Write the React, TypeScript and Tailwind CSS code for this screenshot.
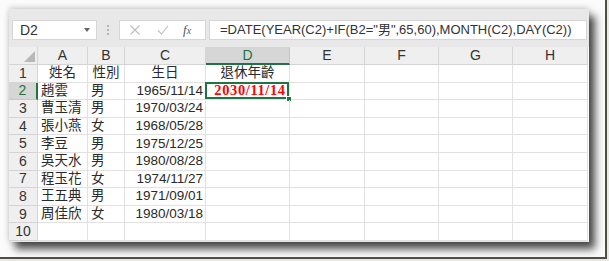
const cols = ['A', 'B', 'C', 'D', 'E', 'F', 'G', 'H'];

type Row = { a: string; b: string; c: string; d?: string };

const rows: Row[] = [
  { a: '趙雲', b: '男', c: '1965/11/14', d: '2030/11/14' },
  { a: '曹玉清', b: '男', c: '1970/03/24' },
  { a: '張小燕', b: '女', c: '1968/05/28' },
  { a: '李豆', b: '男', c: '1975/12/25' },
  { a: '吳天水', b: '男', c: '1980/08/28' },
  { a: '程玉花', b: '女', c: '1974/11/27' },
  { a: '王五典', b: '男', c: '1971/09/01' },
  { a: '周佳欣', b: '女', c: '1980/03/18' },
];

const font = { fontFamily: '"Liberation Sans", "Noto Sans CJK TC", sans-serif' };

function FormulaBar() {
  return (
    <div className="flex items-start h-[38px] pt-[11px] pl-[3px]">
      {/* Name box */}
      <div className="w-[85px] h-[20px] bg-white border border-[#d6d6d6] flex items-center justify-between pl-[7px] pr-[6px] text-[14px] text-[#333]">
        <span>D2</span>
        <span className="w-0 h-0 border-l-[3.5px] border-r-[3.5px] border-t-[4px] border-l-transparent border-r-transparent border-t-[#666]" />
      </div>
      <div className="w-[22px] h-[20px] flex flex-col items-center justify-center gap-[2px]">
        <span className="w-[2px] h-[2px] bg-[#b5b5b5]" />
        <span className="w-[2px] h-[2px] bg-[#b5b5b5]" />
        <span className="w-[2px] h-[2px] bg-[#b5b5b5]" />
      </div>
      {/* Cancel / enter / fx */}
      <div className="w-[87px] h-[20px] bg-white border border-[#d6d6d6] flex items-center">
        <svg width="12" height="12" viewBox="0 0 12 12" className="ml-[9px]">
          <path d="M1.5 1.5 L10.5 10.5 M10.5 1.5 L1.5 10.5" stroke="#bdbdbd" strokeWidth="1.1" fill="none" />
        </svg>
        <svg width="12" height="12" viewBox="0 0 12 12" className="ml-[16px]">
          <path d="M1 6.5 L4.5 10 L11 2" stroke="#bdbdbd" strokeWidth="1.1" fill="none" />
        </svg>
        <span
          className="ml-[14px] text-[13px] italic text-[#555]"
          style={{ fontFamily: '"Liberation Serif", serif' }}
        >
          f<span className="text-[10px]">x</span>
        </span>
      </div>
      {/* Formula input */}
      <div className="ml-[3px] w-[378px] h-[20px] bg-white border border-[#d6d6d6] flex items-center pl-[10px] text-[13px] text-[#333] whitespace-nowrap">
        =DATE(YEAR(C2)+IF(B2="男",65,60),MONTH(C2),DAY(C2))
      </div>
    </div>
  );
}

function Sheet() {
  return (
    <div
      className="grid grid-cols-[29px_50px_37px_81px_84px_75px_74px_74px_75px] grid-rows-[18px_repeat(10,17.6px)] text-[13.5px] text-[#2a2a2a] bg-white"
      style={font}
    >
      {/* corner */}
      <div className="bg-[#efefef] border-r border-b border-[#d4d4d4] flex items-end justify-end pr-[2px] pb-[2px]">
        <svg width="11" height="11" viewBox="0 0 11 11">
          <path d="M11 0 L11 11 L0 11 Z" fill="#b8b8b8" />
        </svg>
      </div>
      {cols.map((c) =>
        c === 'D' ? (
          <div
            key={c}
            className="bg-[#d6d6d6] border-r border-[#c6c6c6] border-b-2 border-b-[#217346] flex items-center justify-center text-[#217346] text-[14px]"
          >
            {c}
          </div>
        ) : (
          <div
            key={c}
            className="bg-[#efefef] border-r border-b border-[#d4d4d4] flex items-center justify-center text-[#333] text-[14px]"
          >
            {c}
          </div>
        )
      )}

      {/* row 1 */}
      <div className="bg-[#efefef] border-r border-b border-[#d4d4d4] flex items-center justify-center text-[#333] text-[14px]">1</div>
      <div className="border-r border-b border-[#e1e1e1] flex items-center justify-center">姓名</div>
      <div className="border-r border-b border-[#e1e1e1] flex items-center justify-center">性別</div>
      <div className="border-r border-b border-[#e1e1e1] flex items-center justify-center">生日</div>
      <div className="border-r border-b border-[#e1e1e1] flex items-center justify-center">退休年齡</div>
      <div className="border-r border-b border-[#e1e1e1]" />
      <div className="border-r border-b border-[#e1e1e1]" />
      <div className="border-r border-b border-[#e1e1e1]" />
      <div className="border-r border-b border-[#e1e1e1]" />

      {rows.map((r, i) => {
        const n = i + 2;
        const sel = n === 2;
        return [
          <div
            key={`h${n}`}
            className={
              sel
                ? 'bg-[#d6d6d6] border-r-2 border-r-[#217346] border-b border-b-[#c6c6c6] flex items-center justify-center text-[#217346] text-[14px]'
                : 'bg-[#efefef] border-r border-b border-[#d4d4d4] flex items-center justify-center text-[#333] text-[14px]'
            }
          >
            {n}
          </div>,
          <div key={`a${n}`} className="border-r border-b border-[#e1e1e1] flex items-center pl-[3px]">{r.a}</div>,
          <div key={`b${n}`} className="border-r border-b border-[#e1e1e1] flex items-center pl-[3px]">{r.b}</div>,
          <div key={`c${n}`} className="border-r border-b border-[#e1e1e1] flex items-center justify-end pr-[2px]">{r.c}</div>,
          <div key={`d${n}`} className="relative border-r border-b border-[#e1e1e1] flex items-center justify-center pl-[5px]">
            {r.d && (
              <>
                <span
                  className="text-[#ff0000] font-bold text-[14.5px] tracking-[0.6px]"
                  style={{ fontFamily: '"Liberation Serif", serif' }}
                >
                  {r.d}
                </span>
                <span className="absolute -left-[1px] -top-[1px] right-0 bottom-0 border-2 border-[#217346]" />
                <span className="absolute -right-[3px] -bottom-[3px] w-[6px] h-[6px] bg-[#217346] border border-white" />
              </>
            )}
          </div>,
          <div key={`e${n}`} className="border-r border-b border-[#e1e1e1]" />,
          <div key={`f${n}`} className="border-r border-b border-[#e1e1e1]" />,
          <div key={`g${n}`} className="border-r border-b border-[#e1e1e1]" />,
          <div key={`i${n}`} className="border-r border-b border-[#e1e1e1]" />,
        ];
      })}

      {/* row 10 */}
      <div className="bg-[#efefef] border-r border-b border-[#d4d4d4] flex items-center justify-center text-[#333] text-[14px]">10</div>
      {cols.map((c) => (
        <div key={`r10${c}`} className="border-r border-b border-[#e1e1e1]" />
      ))}
    </div>
  );
}

export default function App() {
  return (
    <div className="w-[609px] h-[261px] bg-[#e9e9e1] overflow-hidden" style={font}>
      <div className="w-[607px] h-[259px] bg-[#fbfbfb] border-r-2 border-b-2 border-[#4e5048] pt-[9px] pl-[9px]">
        <div className="w-[580px] h-[233px] bg-[#e8e8e8] shadow-[6px_7px_8px_rgba(0,0,0,0.7),0_-1px_6px_rgba(0,0,0,0.2)] overflow-hidden">
          <div className="h-[38px]">
            <FormulaBar />
          </div>
          <Sheet />
        </div>
      </div>
    </div>
  );
}
